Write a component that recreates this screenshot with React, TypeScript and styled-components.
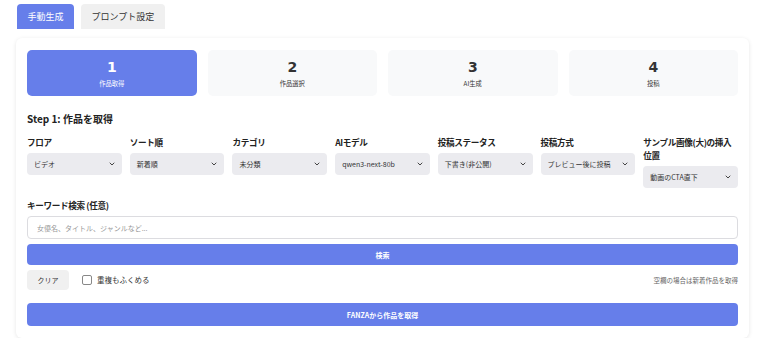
import React, { useState } from "react";
import styled, { createGlobalStyle } from "styled-components";

const GlobalStyle = createGlobalStyle`
  body {
    margin: 0;
    background: #ffffff;
    font-family: "Noto Sans CJK JP", "Noto Sans", sans-serif;
    color: #222;
  }
`;

const Page = styled.div`
  width: 733px;
  padding: 4px 0 0 16px;
`;

const Tabs = styled.div`
  display: flex;
  gap: 7px;
  padding-left: 1px;
  margin-bottom: 9px;
`;

const Tab = styled.button<{ $active?: boolean }>`
  height: 25px;
  padding: 0 10.5px;
  border: none;
  border-radius: 4px 4px 0 0;
  font-family: inherit;
  font-size: 9px;
  line-height: 12px;
  background: ${(p) => (p.$active ? "#667eea" : "#f0f0f0")};
  color: ${(p) => (p.$active ? "#ffffff" : "#333")};
`;

const Card = styled.div`
  background: #fff;
  border-radius: 6px;
  box-shadow: 0 1px 4px rgba(0, 0, 0, 0.1);
  padding: 12px 11px 12px;
`;

const Steps = styled.div`
  display: grid;
  grid-template-columns: repeat(4, 1fr);
  gap: 11px;
`;

const StepBox = styled.div<{ $active?: boolean }>`
  height: 46px;
  border-radius: 5px;
  background: ${(p) => (p.$active ? "#667eea" : "#f8f9fa")};
  color: ${(p) => (p.$active ? "#fff" : "#333")};
  display: flex;
  flex-direction: column;
  align-items: center;
  justify-content: center;
`;

const StepNum = styled.div`
  font-family: "DejaVu Sans", sans-serif;
  font-weight: bold;
  font-size: 14px;
  line-height: 16px;
`;

const StepLabel = styled.div`
  font-size: 6.3px;
  line-height: 8px;
  margin-top: 5px;
`;

const Heading = styled.h3`
  margin: 16px 0 10px;
  font-size: 10px;
  line-height: 14px;
  font-weight: bold;
`;

const Fields = styled.div`
  display: grid;
  grid-template-columns: repeat(7, 1fr);
  gap: 8px;
  align-items: start;
`;

const Field = styled.div`
  display: flex;
  flex-direction: column;
`;

const Label = styled.label`
  font-size: 8.6px;
  line-height: 13px;
  font-weight: bold;
  letter-spacing: -0.35px;
  white-space: pre-line;
  margin-bottom: 4px;
`;

const SelectBox = styled.div`
  height: 22px;
  border-radius: 4px;
  background: #ebebef;
  display: flex;
  align-items: center;
  justify-content: space-between;
  padding: 0 7px;
  font-size: 7px;
  line-height: 10px;
  color: #333;
`;

const Keyword = styled.div`
  margin-top: 11px;
  display: flex;
  flex-direction: column;
`;

const Input = styled.input`
  height: 23px;
  box-sizing: border-box;
  border: 1px solid #dcdce0;
  border-radius: 4px;
  padding: 0 9px;
  font-family: inherit;
  font-size: 7px;
  outline: none;
  &::placeholder {
    color: #999;
  }
`;

const PrimaryButton = styled.button<{ $h: number }>`
  display: block;
  height: ${(p) => p.$h}px;
  border: none;
  border-radius: 4px;
  background: #667eea;
  color: #fff;
  font-family: inherit;
  font-size: 7px;
  line-height: 10px;
  font-weight: bold;
  width: 100%;
`;

const SearchWrap = styled.div`
  margin-top: 5px;
`;

const Row = styled.div`
  display: flex;
  align-items: center;
  height: 20px;
  margin: 5px 0 13px;
`;

const ClearButton = styled.button`
  height: 20px;
  width: 42px;
  border: none;
  border-radius: 4px;
  background: #f0f0f0;
  color: #333;
  font-family: inherit;
  font-size: 7px;
  line-height: 10px;
`;

const Check = styled.label`
  display: flex;
  align-items: center;
  gap: 5px;
  margin-left: 13px;
  font-size: 7.5px;
  line-height: 10px;
  color: #333;
`;

const Box = styled.span`
  width: 8px;
  height: 8px;
  border: 1px solid #888;
  border-radius: 2px;
  background: #fff;
`;

const Hint = styled.span`
  margin-left: auto;
  font-size: 6.5px;
  line-height: 10px;
  color: #666;
`;

const Chevron = () => (
  <svg width="6" height="4" viewBox="0 0 6 4" fill="none">
    <path d="M1 1l2 2 2-2" stroke="#444" strokeWidth="1" strokeLinecap="round" strokeLinejoin="round" />
  </svg>
);

const steps = [
  { n: "1", label: "作品取得" },
  { n: "2", label: "作品選択" },
  { n: "3", label: "AI生成" },
  { n: "4", label: "投稿" },
];

const fields = [
  { label: "フロア", value: "ビデオ" },
  { label: "ソート順", value: "新着順" },
  { label: "カテゴリ", value: "未分類" },
  { label: "AIモデル", value: "qwen3-next-80b" },
  { label: "投稿ステータス", value: "下書き(非公開)" },
  { label: "投稿方式", value: "プレビュー後に投稿" },
  // wraps after 挿入 in the original layout
  { label: "サンプル画像(大)の挿入\n位置", value: "動画のCTA直下" },
];

export default function App() {
  const [tab, setTab] = useState(0);
  return (
    <Page>
      <GlobalStyle />
      <Tabs>
        <Tab $active={tab === 0} onClick={() => setTab(0)}>
          手動生成
        </Tab>
        <Tab $active={tab === 1} onClick={() => setTab(1)}>
          プロンプト設定
        </Tab>
      </Tabs>
      <Card>
        <Steps>
          {steps.map((s, i) => (
            <StepBox key={s.n} $active={i === 0}>
              <StepNum>{s.n}</StepNum>
              <StepLabel>{s.label}</StepLabel>
            </StepBox>
          ))}
        </Steps>
        <Heading>Step 1: 作品を取得</Heading>
        <Fields>
          {fields.map((f) => (
            <Field key={f.label}>
              <Label>{f.label}</Label>
              <SelectBox>
                <span>{f.value}</span>
                <Chevron />
              </SelectBox>
            </Field>
          ))}
        </Fields>
        <Keyword>
          <Label>キーワード検索 (任意)</Label>
          <Input placeholder="女優名、タイトル、ジャンルなど..." />
        </Keyword>
        <SearchWrap>
          <PrimaryButton $h={21}>検索</PrimaryButton>
        </SearchWrap>
        <Row>
          <ClearButton>クリア</ClearButton>
          <Check>
            <Box />
            重複もふくめる
          </Check>
          <Hint>空欄の場合は新着作品を取得</Hint>
        </Row>
        <PrimaryButton $h={23}>FANZAから作品を取得</PrimaryButton>
      </Card>
    </Page>
  );
}
